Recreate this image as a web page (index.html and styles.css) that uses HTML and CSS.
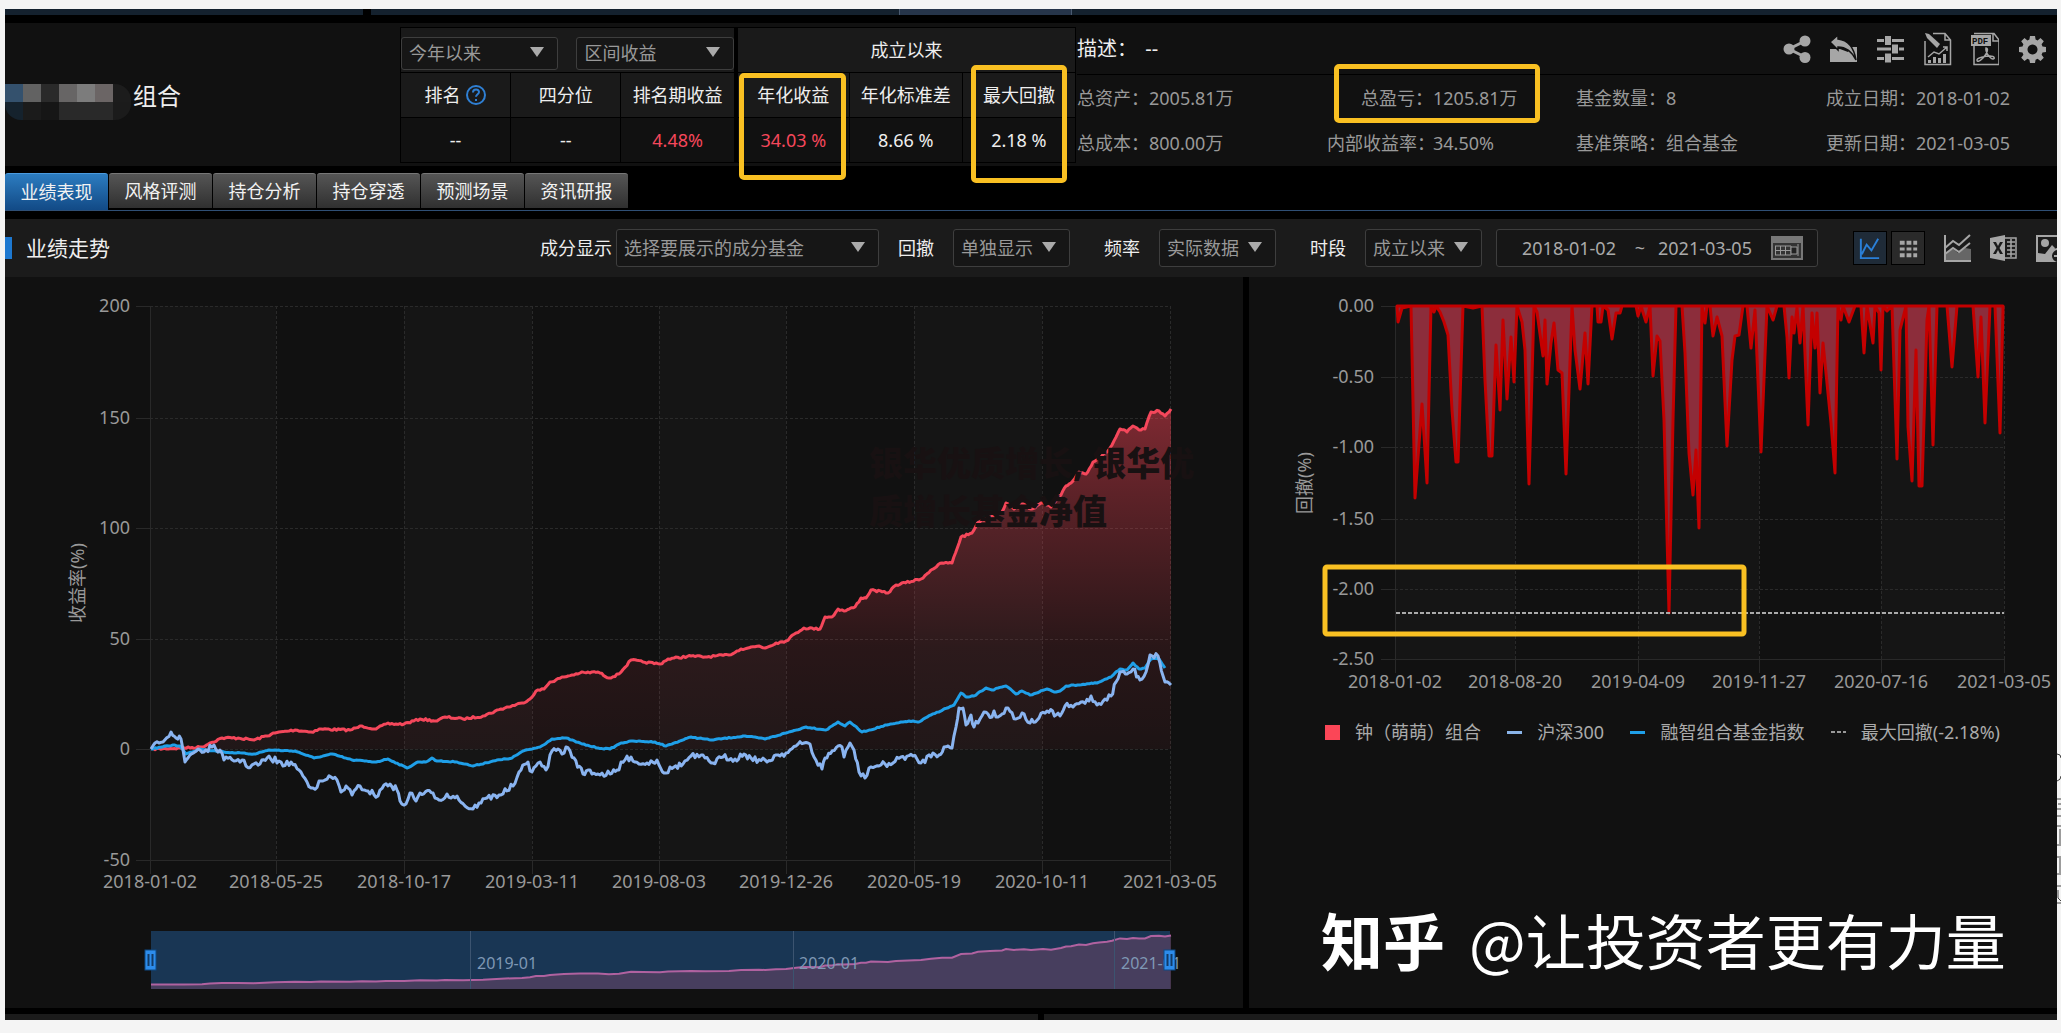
FILE: index.html
```html
<!DOCTYPE html>
<html lang="zh-CN">
<head>
<meta charset="utf-8">
<title>组合业绩表现</title>
<link rel="stylesheet" href="styles.css">
</head>
<body>
<div class="frame">
  <div class="app">
    <div class="top-strip"><i></i><i class="gap"></i><i></i><i class="current"></i><i></i></div>

    <header class="summary">
      <div class="portfolio">
        <div class="mosaic" aria-hidden="true">
          <i class="m1"></i><i class="m2"></i><i class="m3"></i><i class="m4"></i><i class="m5"></i><i class="m6"></i><i class="m7"></i>
          <i class="m8"></i><i class="m9"></i><i class="m10"></i><i class="m11"></i><i class="m11"></i><i class="m11"></i><i class="m9"></i>
        </div>
        <h1>组合</h1>
      </div>

      <div class="metrics-wrap">
        <table class="metrics">
          <colgroup><col class="c1"><col class="c1"><col class="c2"><col class="c3"><col class="c3"><col class="c3"></colgroup>
          <thead>
            <tr>
              <th colspan="3">
                <div class="pickers">
                  <span class="pick"><select aria-label="区间"><option>今年以来</option></select></span>
                  <span class="pick"><select aria-label="指标"><option>区间收益</option></select></span>
                </div>
              </th>
              <th colspan="3" class="sep">成立以来</th>
            </tr>
            <tr>
              <th><span class="rank">排名<svg class="help" viewBox="0 0 22 22"><circle cx="11" cy="11" r="9"/><path d="M8 8.600c0-4 6-4 6-.6 0 2.200-3 2.200-3 4.800M11 15v2"/></svg></span></th>
              <th>四分位</th><th>排名期收益</th><th class="sep">年化收益</th><th>年化标准差</th><th>最大回撤</th>
            </tr>
          </thead>
          <tbody>
            <tr><td>--</td><td>--</td><td class="up">4.48%</td><td class="up sep">34.03 %</td><td>8.66 %</td><td>2.18 %</td></tr>
          </tbody>
        </table>
        <div class="mark mark-return"></div>
        <div class="mark mark-drawdown"></div>
      </div>

      <div class="info">
        <div class="info-top">
          <p class="desc">描述： <span>--</span></p>
          <div class="actions">
            <button aria-label="分享"><svg viewBox="0 0 28 34"><path d="M22 9 6 17l16 8" fill="none" stroke="currentColor" stroke-width="3"/><circle cx="6" cy="17" r="5.500"/><circle cx="22" cy="9" r="5.500"/><circle cx="22" cy="25.500" r="5.500"/></svg></button>
            <button aria-label="导出"><svg viewBox="0 0 28 34"><path d="M0 17h10l8 3 4-5h5v15H0z"/><path d="M0 10 8 3v4c10 1 16 9 18 21-4-8-10-13-18-13v3z" stroke="#111" stroke-width="1.500"/></svg></button>
            <button aria-label="参数"><svg viewBox="0 0 28 34"><path d="M0 7h7v3H0zM15 7h12v3H15zM0 15.500h14v3H0zM22 15.500h5v3h-5zM0 25h7v3H0zM15 25h12v3H15zM8 4h6v9H8zM15 12.500h6v9h-6zM8 21.500h6v9H8z"/></svg></button>
            <button aria-label="报告"><svg viewBox="0 0 28 34"><path d="M1 9v23.500h25.500V8L21 1.500H9M21 1.500V8h5.500" fill="none" stroke="currentColor" stroke-width="1.500"/><path d="m1 1 4 1 11 10-3 4L3 6z"/><path d="m4 25 6-5 5 2 8-7M19 15h4v4" fill="none" stroke="currentColor" stroke-width="1.500"/><path d="M4 28h3v3H4zM9 25h3v6H9zM14 26h3v5h-3zM19 22h3v9h-3z"/></svg></button>
            <button aria-label="导出PDF"><svg viewBox="0 0 28 34"><path d="M3 14v18.500h25V8l-5-6.500H3M22 1.500V9h5.500" fill="none" stroke="currentColor" stroke-width="1.500"/><path d="M0 3h20v11H0z"/><text x="1" y="12" class="pdf">PDF</text><path d="M15 16c3 0 1 6-3 10s-6 4-6 2 8-4 13-4 5 3 3 3-8-6-7-11z" fill="none" stroke="currentColor" stroke-width="1.500"/></svg></button>
            <button aria-label="设置"><svg viewBox="0 0 28 34"><path fill-rule="evenodd" d="M12 4h5l.6 3.600 2 .9L22.500 6l3.300 3.300-2.200 3 .9 2.100 3.500.6v5l-3.500.6-.9 2.100 2.200 3-3.300 3.300-2.900-2.200-2 .9-.6 3.300h-5l-.6-3.300-2-.9-2.900 2.200-3.300-3.300 2.200-3-.9-2.100L1 20v-5l3.500-.6.9-2.100-2.200-3L6.500 6l2.900 2.500 2-.9zM14.500 12.500a5 5 0 1 0 .01 0z"/></svg></button>
          </div>
        </div>
        <dl class="facts">
          <div><dt>总资产：</dt><dd>2005.81万</dd></div>
          <div class="profit"><dt>总盈亏：</dt><dd>1205.81万</dd><i class="mark mark-profit"></i></div>
          <div><dt>基金数量：</dt><dd>8</dd></div>
          <div><dt>成立日期：</dt><dd>2018-01-02</dd></div>
          <div><dt>总成本：</dt><dd>800.00万</dd></div>
          <div class="profit"><dt>内部收益率：</dt><dd>34.50%</dd></div>
          <div><dt>基准策略：</dt><dd>组合基金</dd></div>
          <div><dt>更新日期：</dt><dd>2021-03-05</dd></div>
        </dl>
      </div>
    </header>

    <nav class="tabs">
      <button class="active">业绩表现</button><button>风格评测</button><button>持仓分析</button><button>持仓穿透</button><button>预测场景</button><button>资讯研报</button>
    </nav>

    <section class="toolbar">
      <h2>业绩走势</h2>
      <label class="field wide">成分显示<span class="pick"><select><option>选择要展示的成分基金</option></select></span></label>
      <label class="field">回撤<span class="pick"><select><option>单独显示</option></select></span></label>
      <label class="field far">频率<span class="pick"><select><option>实际数据</option></select></span></label>
      <label class="field far">时段<span class="pick"><select><option>成立以来</option></select></span></label>
      <div class="range">
        <input type="text" value="2018-01-02" aria-label="开始日期"><span>~</span><input type="text" value="2021-03-05" aria-label="结束日期">
        <svg viewBox="0 0 32 26"><path d="M0 1h32v24H0z" fill="#777"/><path d="M2 8h28v15H2z" fill="#333"/><path d="M4 11h16M4 15.500h16M4 20h16M4.500 11v9M9.500 11v9M14.500 11v9M20 11v9M27 9v12" stroke="#999" fill="none"/><path d="M20 12h6v7h-6z" fill="#222" stroke="#999"/></svg>
      </div>
      <div class="views">
        <button class="view on" aria-label="图表"><svg viewBox="0 0 27 28"><path d="M4 4v20h19M5 20l5-10 5 6 7-12" fill="none" stroke="#2a7fd8" stroke-width="2"/></svg></button>
        <button class="view" aria-label="表格"><svg viewBox="0 0 27 28"><path d="M5 6h5v4H5zM12 6h5v4h-5zM19 6h4v4h-4zM5 13h5v3H5zM12 13h5v3h-5zM19 13h4v3h-4zM5 19h5v4H5zM12 19h5v4h-5zM19 19h4v4h-4z"/></svg></button>
      </div>
      <div class="tools">
        <button aria-label="面积图"><svg viewBox="0 0 27 28"><path d="M1 20l8-5 5 4 7-5 6 1v12H1z" fill="#666"/><path d="M1 1v26h26M1 14l8-7 6 4L26 1M1 20l8-6 6 4 11-9" fill="none" stroke="currentColor" stroke-width="2"/></svg></button>
        <button aria-label="导出Excel"><svg viewBox="0 0 27 28"><path fill-rule="evenodd" d="M0 4 15 1v26L0 24zM3 8l3.500 6L3 20h3l2-4 2 4h3l-3.500-6L13 8h-3l-2 4-2-4z"/><path d="M15 4h11v20H15M17 8h8M17 12h8M17 16h8M17 20h8M21 5v18" fill="none" stroke="currentColor" stroke-width="1.500"/></svg></button>
        <button aria-label="导出图片"><svg viewBox="0 0 27 28"><path d="M1 2h26v25H1z" fill="none" stroke="currentColor" stroke-width="2"/><circle cx="9" cy="9" r="4"/><path d="m2 26 0-7 7 1 7-9 3 3-4 12z"/><circle cx="22" cy="22" r="7" fill="#1b1b1b" stroke="currentColor" stroke-width="2"/><path d="M18 22h8M22 18v8" stroke="currentColor" stroke-width="2"/></svg></button>
      </div>
    </section>

    <main class="panels">
      <section class="panel">
        <svg id="returns" class="chart" viewBox="5 277 1238 725"></svg>
      </section>
      <section class="panel">
        <svg id="drawdown" class="chart" viewBox="1249 277 808 430"></svg>
        <ul class="legend">
          <li><i class="key square"></i>钟（萌萌）组合</li>
          <li><i class="key light"></i>沪深300</li>
          <li><i class="key blue"></i>融智组合基金指数</li>
          <li><i class="key dashed"></i>最大回撤(-2.18%)</li>
        </ul>
        <p class="credit"><b>知乎</b><span>@让投资者更有力量</span></p>
      </section>
    </main>
    <div class="bottom-strip"><i></i><i></i></div>
  </div>
  <div class="gutter">
    <svg viewBox="0 0 4 160"><path d="M0 4q4 0 4 4M0 31q4-1 4-5M0 49h4M1 54h3M0 59h4M0 66h4M0 76h4M3 79v15M0 95h4M0 107h4M3 108v15M0 124h4M0 136h4M1 140v8l3 3M0 153h4" fill="none" stroke="#444"/></svg>
  </div>
</div>
<script src="charts.js"></script>
</body>
</html>
```
FILE: styles.css
```css
* { box-sizing: border-box; }

body {
  margin: 0;
  background: #f4f4f4;
  color: #eee;
  font: 18px/24px "Noto Sans", "Noto Sans CJK SC", sans-serif;
}

h1, h2, p, dl, dd, ul { margin: 0; padding: 0; font-weight: 400; }
i { font-style: normal; }
button { padding: 0; border: 0; background: none; color: #a6a6a6; font: inherit; }
button svg { display: block; width: 100%; fill: currentColor; }

.frame {
  display: grid;
  grid-template-columns: 5px minmax(0, 1fr) 4px;
  padding-top: 9px;
}
.app { grid-column: 2; overflow: hidden; background: #000; }
.gutter { padding-top: 741px; }
.gutter svg { display: block; width: 4px; height: 160px; }

.top-strip { display: grid; grid-template-columns: 358fr 8fr 528fr 173fr 985fr; height: 6px; margin-bottom: 8px; }
.top-strip i { background: #14212e; }
.top-strip .gap { background: #000; }
.top-strip .current { background: #26354a; border: solid #4a5a70; border-width: 0 1px; }

/* summary */
.summary { display: flex; height: 143px; background: #111; }
.portfolio { flex: 0 0 395px; display: flex; align-items: center; gap: 2px; }
.portfolio h1 { padding-top: 2px; font-size: 24px; line-height: 32px; }
.mosaic {
  display: grid;
  grid-template: repeat(2, 18px) / repeat(7, 18px);
  margin-top: 14px;
  border-radius: 0 16px 16px 16px;
  overflow: hidden;
}
.m1 { background: #34516d; } .m2 { background: #626262; } .m3 { background: #2a2a2a; }
.m4 { background: #676565; } .m5 { background: #7c7c7c; } .m6 { background: #6b6565; }
.m7 { background: #1c1c1c; } .m8 { background: #15222d; } .m9 { background: #1b1b1b; }
.m10 { background: #161616; } .m11 { background: #292929; }

.metrics-wrap { position: relative; flex: 0 0 676px; padding-top: 4px; }
.metrics { width: 100%; table-layout: fixed; border-collapse: collapse; }
.metrics .c1 { width: 110px; }
.metrics .c2 { width: 115px; }
.metrics .c3 { width: 113px; }
.metrics th, .metrics td { height: 45px; padding: 0; border: 1px solid #000; font-weight: 400; text-align: center; }
.metrics th { background: #1a1a1a; }
.metrics .sep { border-left-width: 4px; }
.metrics .up { color: #f5475b; }
.rank { display: inline-flex; align-items: center; gap: 4px; }
.help { width: 22px; height: 22px; fill: none; stroke: #2f7fd3; stroke-width: 2; }

.pickers { display: flex; gap: 18px; margin-top: 6px; }
.pickers .pick { width: 158px; height: 33px; }
.pick { position: relative; display: inline-block; }
.pick::after {
  content: "";
  position: absolute;
  top: 50%;
  right: 14px;
  margin-top: -6px;
  border: solid transparent;
  border-width: 10px 7px 0;
  border-top-color: #aaa;
}
.pick select {
  appearance: none;
  width: 100%;
  height: 100%;
  padding: 0 0 0 7px;
  border: 1px solid #3e3e3e;
  border-radius: 3px;
  background: #161616;
  color: #999;
  font: inherit;
}

.mark { position: absolute; z-index: 2; border: 5px solid #f9c022; border-radius: 5px; pointer-events: none; }
.mark-return { left: 339px; top: 50px; width: 107px; height: 107px; }
.mark-drawdown { left: 571px; top: 42px; width: 96px; height: 118px; }
.mark-profit { left: 7px; top: -11px; width: 206px; height: 59px; }

.info { flex: 1; min-width: 0; padding-left: 1px; }
.info-top { display: flex; justify-content: space-between; align-items: center; height: 52px; padding-right: 11px; border-bottom: 1px solid #000; }
.desc { font-size: 20px; }
.desc span { margin-left: 3px; }
.actions { display: flex; gap: 19px; }
.actions button { width: 28px; }
.pdf { fill: #111; font: bold 9px "Liberation Mono", monospace; }
.facts { display: grid; grid-template-columns: 250fr 249fr 250fr 231fr; color: #999; }
.facts div { position: relative; display: flex; height: 45px; align-items: center; }
.facts .profit dt { width: 106px; text-align: right; white-space: nowrap; }

/* tabs */
.tabs { display: flex; gap: 1px; margin: 7px 0 8px; border-bottom: 1px solid #2f4f75; }
.tabs button {
  width: 103px;
  height: 35px;
  margin-bottom: 2px;
  border-top: 1px solid #777;
  border-radius: 3px 3px 0 0;
  background: linear-gradient(#555, #303030);
  color: #f2f2f2;
}
.tabs .active { height: 37px; margin-bottom: 0; border-color: #4a9ade; background: linear-gradient(#2c7cc0, #124a86); }

/* toolbar */
.toolbar { display: flex; align-items: center; height: 58px; background: #1b1b1b; white-space: nowrap; }
.toolbar > * { flex-shrink: 0; }
.toolbar h2 { width: 535px; padding-left: 14px; border-left: 7px solid #1d78d0; font-size: 21px; line-height: 22px; }
.field { display: flex; align-items: center; gap: 19px; margin-right: 19px; }
.field .pick { width: 117px; height: 38px; }
.field.wide { gap: 4px; }
.field.wide .pick { width: 263px; }
.field + .field.far { margin-left: 15px; }
.range { display: flex; align-items: center; width: 322px; height: 38px; margin-left: -6px; padding: 0 14px 0 25px; border: 1px solid #3e3e3e; border-radius: 3px; background: #161616; color: #aaa; }
.field:has(+ .range) { margin-right: 20px; }
.range input { width: 100px; padding: 0; border: 0; background: none; color: inherit; font: inherit; }
.range span { width: 36px; text-align: center; }
.range svg { width: 32px; height: 26px; margin-left: auto; }
.views { display: flex; gap: 4px; margin: 0 19px 0 35px; }
.view { width: 34px; height: 34px; padding: 3px; border: 1px solid #000; background: #2a2a2a; }
.view.on { background: #1f2b38; }
.tools { display: flex; gap: 19px; }
.tools button { width: 27px; }

/* charts */
.panels { display: grid; grid-template-columns: 1238fr 808fr; gap: 6px; padding-bottom: 6px; }
.panel { min-width: 0; background: #111; }
.panel:first-child { padding-bottom: 6px; }
.chart { display: block; width: 100%; }
.chart text { fill: #999; font-size: 18px; }
.chart .end { text-anchor: end; }
.chart .mid { text-anchor: middle; }
.chart .brush-label { fill: #7f98b5; font-size: 16px; }
.chart .stamp { fill: #181112; font-size: 34px; font-weight: 900; }
.chart .pdf { fill: #111; }
.grid { fill: none; stroke: #2a2a2a; stroke-dasharray: 3 2; }
.axis { fill: none; stroke: #292929; }
.band { fill: #151515; }
.line { fill: none; stroke-width: 3; stroke-linejoin: round; }
.red { stroke: #f5475b; }
.blue { stroke: #1f9fe8; }
.light { stroke: #8ab4f0; }
.falls { fill: #8c2d3b; stroke: #c40000; stroke-width: 3; stroke-linejoin: round; }
.limit { fill: none; stroke: #aaa; stroke-width: 2; stroke-dasharray: 4 2; }
.frame-mark { fill: none; stroke: #f9c022; stroke-width: 5; }
.brush { fill: #193654; }
.brush-area { fill: #574161; fill-opacity: .75; }
.brush-line { fill: none; stroke: #b062a0; stroke-width: 2; }
.brush-tick { stroke: #3c5470; }
.handle { fill: #2d8ceb; stroke: #0e4a86; }

.legend { display: flex; justify-content: space-between; margin: 0 57px 0 76px; padding: 13px 0; color: #aaa; list-style: none; white-space: nowrap; }
.legend li { display: flex; align-items: center; gap: 15px; }
.key { width: 15px; }
.square { height: 15px; background: #fb4657; }
.key.light { height: 3px; background: #8ab4e8; }
.key.blue { height: 3px; background: #1f9fe8; }
.dashed { height: 2px; background: repeating-linear-gradient(90deg, #999 0 4px, transparent 4px 6px); }
.credit { display: flex; gap: 24px; margin: 138px 0 0 72px; color: #fff; font: 400 60px/88px "Noto Sans CJK SC", sans-serif; white-space: nowrap; }
.credit b { font-weight: 700; font-size: 62px; }

.bottom-strip { display: grid; grid-template-columns: 1033fr 1013fr; gap: 6px; height: 6px; }
.bottom-strip i { background: #1b1b1b; }
```
FILE: charts.js
```js
const red = [[151,749],[184,748],[202,747],[210,743],[222,738],[238,738],[254,740],[275,733],[295,730],[311,732],[321,729],[350,730],[362,726],[376,729],[386,724],[404,724],[420,719],[437,721],[445,717],[463,719],[483,716],[501,709],[522,703],[530,699],[536,691],[544,689],[550,682],[564,677],[580,673],[598,672],[609,678],[619,674],[631,660],[643,662],[660,664],[668,659],[691,656],[705,657],[729,655],[741,649],[759,646],[765,648],[776,643],[786,641],[796,633],[804,628],[820,629],[825,617],[832,617],[838,609],[844,611],[855,607],[861,598],[866,598],[871,590],[888,593],[896,585],[921,579],[931,570],[942,563],[952,563],[961,537],[972,533],[978,522],[990,517],[1002,512],[1006,503],[1014,509],[1024,504],[1031,509],[1043,503],[1051,507],[1061,495],[1066,486],[1071,483],[1079,472],[1086,474],[1093,462],[1099,458],[1107,452],[1112,445],[1120,429],[1127,432],[1133,426],[1139,430],[1145,429],[1151,412],[1159,411],[1165,416],[1171,409]];
const blue = [[151,749],[173,745],[180,746],[186,754],[200,749],[224,752],[254,754],[269,750],[295,751],[314,758],[332,754],[352,760],[376,762],[388,759],[407,768],[418,762],[426,762],[432,758],[437,761],[457,762],[473,766],[493,761],[512,758],[523,751],[540,747],[552,739],[566,738],[582,744],[598,748],[610,749],[621,743],[633,741],[655,742],[666,746],[691,737],[711,740],[745,736],[765,739],[786,733],[806,727],[826,730],[838,722],[845,726],[850,722],[862,732],[887,725],[909,721],[919,722],[931,715],[954,705],[961,693],[966,697],[974,696],[986,688],[992,690],[1006,686],[1016,694],[1022,691],[1030,695],[1047,689],[1054,692],[1060,691],[1066,686],[1097,683],[1111,677],[1120,669],[1127,670],[1133,663],[1139,669],[1145,668],[1151,659],[1159,659],[1165,668]];
const light = [[151,749],[159,743],[171,732],[176,738],[181,739],[185,762],[190,755],[198,749],[204,752],[212,747],[220,750],[224,760],[242,760],[246,766],[260,764],[267,758],[279,761],[283,766],[291,762],[299,770],[307,782],[313,788],[323,781],[331,777],[337,780],[341,792],[346,786],[352,795],[360,786],[368,791],[378,796],[384,785],[390,784],[397,790],[400,801],[406,804],[410,793],[416,801],[420,793],[433,793],[439,800],[447,794],[451,798],[457,796],[465,806],[473,809],[479,803],[487,798],[499,795],[513,786],[521,770],[528,762],[530,771],[538,763],[546,770],[552,751],[558,749],[562,754],[566,747],[574,758],[583,774],[588,770],[598,774],[610,774],[619,770],[621,762],[631,757],[639,764],[647,763],[657,760],[664,773],[674,767],[683,764],[691,756],[705,758],[713,763],[723,757],[735,759],[744,754],[751,758],[767,762],[776,755],[786,753],[796,746],[804,743],[810,744],[814,757],[822,769],[825,758],[838,746],[842,747],[844,757],[850,743],[854,750],[859,772],[865,778],[869,768],[881,765],[893,763],[901,757],[913,756],[921,763],[933,753],[939,755],[944,747],[952,748],[956,727],[959,708],[963,708],[966,725],[971,715],[974,727],[984,712],[992,717],[994,711],[998,717],[1008,708],[1016,719],[1022,713],[1030,723],[1039,718],[1047,711],[1060,716],[1065,706],[1073,707],[1081,702],[1089,701],[1091,696],[1097,705],[1105,699],[1111,696],[1116,682],[1120,672],[1127,674],[1133,669],[1140,680],[1146,672],[1150,655],[1158,656],[1165,682],[1171,685]];
const falls = [[1397,306],[1398,322],[1402,308],[1411,306],[1415,498],[1422,404],[1427,483],[1431,306],[1434,312],[1436,306],[1440,312],[1444,322],[1448,335],[1452,410],[1456,462],[1458,462],[1463,306],[1473,308],[1482,306],[1485,380],[1489,456],[1492,456],[1496,345],[1500,410],[1503,320],[1507,399],[1511,337],[1514,382],[1517,306],[1522,322],[1525,350],[1529,484],[1534,306],[1537,312],[1543,356],[1545,320],[1547,384],[1551,343],[1554,323],[1558,370],[1562,373],[1566,474],[1572,306],[1575,350],[1580,389],[1585,333],[1588,384],[1592,306],[1597,306],[1598,322],[1601,322],[1603,306],[1608,310],[1612,339],[1616,313],[1620,313],[1622,306],[1636,306],[1638,316],[1641,306],[1646,322],[1650,306],[1653,376],[1657,336],[1660,341],[1664,420],[1669,613],[1673,420],[1676,306],[1682,306],[1685,353],[1689,453],[1693,495],[1696,450],[1699,528],[1702,306],[1705,323],[1707,306],[1710,306],[1713,336],[1717,317],[1722,336],[1727,446],[1732,360],[1735,336],[1739,335],[1743,306],[1747,306],[1751,348],[1755,310],[1761,452],[1767,306],[1773,320],[1777,306],[1784,306],[1787,337],[1789,378],[1792,317],[1794,333],[1797,308],[1800,343],[1803,306],[1808,425],[1812,313],[1815,348],[1817,313],[1820,393],[1823,343],[1827,383],[1831,423],[1835,473],[1838,306],[1841,320],[1843,306],[1849,322],[1855,306],[1861,306],[1864,353],[1867,306],[1873,343],[1875,306],[1879,313],[1881,370],[1883,306],[1887,311],[1892,306],[1897,459],[1900,330],[1906,306],[1908,427],[1912,481],[1916,350],[1919,486],[1922,486],[1927,320],[1929,306],[1933,445],[1937,306],[1947,306],[1952,367],[1957,306],[1973,306],[1978,377],[1981,317],[1985,423],[1990,306],[1995,306],[2000,433],[2003,310]];

// Daily movement between the stored turning points.
let seed = 7;
function noise() {
  seed = (seed * 16807) % 2147483647;
  return seed / 2147483647 - 0.5;
}
function daily(points, amount) {
  const out = [points[0]];
  for (let i = 1; i < points.length; i++) {
    const [x0, y0] = points[i - 1], [x1, y1] = points[i];
    const steps = Math.max(1, Math.round((x1 - x0) / 2));
    for (let s = 1; s < steps; s++) {
      const t = s / steps;
      out.push([x0 + (x1 - x0) * t, y0 + (y1 - y0) * t + noise() * amount]);
    }
    out.push([x1, y1]);
  }
  return out;
}
const path = pts => 'M' + pts.map(p => p[0].toFixed(1) + ' ' + p[1].toFixed(1)).join('L');

function frame(xs, ys, dates, labels, labelX, dateY) {
  const left = xs[0], right = xs[xs.length - 1], top = ys[0], bottom = ys[ys.length - 1];
  let s = '';
  for (let i = 0; i < xs.length - 1; i += 2)
    s += `<rect class="band" x="${xs[i]}" y="${top}" width="${xs[i + 1] - xs[i]}" height="${bottom - top}"/>`;
  xs.forEach((x, i) => {
    s += `<path class="${i ? 'grid' : 'axis'}" d="M${x + .5} ${top}V${bottom}"/><path class="axis" d="M${x + .5} ${bottom}v14"/>`;
    s += `<text class="mid" x="${x}" y="${dateY}">${dates[i]}</text>`;
  });
  ys.forEach((y, i) => {
    s += `<path class="${i < ys.length - 1 ? 'grid' : 'axis'}" d="M${left} ${y + .5}H${right}"/><path class="axis" d="M${left - 14} ${y + .5}h14"/>`;
    s += `<text class="end" x="${labelX}" y="${y + 6}">${labels[i]}</text>`;
  });
  return s;
}

const redDaily = daily(red, 2);
const brush = red.map(([x, y]) => [x, 984.5 - (749 - y) * 0.144]);
const handle = x => `<rect class="handle" x="${x - 5}" y="950" width="11" height="20"/><path d="M${x - 1.5} 954v12M${x + 2.5} 954v12" stroke="#123a66" stroke-width="2"/>`;

document.getElementById('returns').innerHTML =
  '<defs><linearGradient id="fade" x1="0" y1="0" x2="0" y2="1"><stop offset="0" stop-color="#ff4658" stop-opacity=".46"/><stop offset=".25" stop-color="#ff4658" stop-opacity=".32"/><stop offset=".7" stop-color="#ff4658" stop-opacity=".1"/><stop offset="1" stop-color="#ff4658" stop-opacity=".05"/></linearGradient><clipPath id="plot"><path d="M151 306h1044v554H151z"/></clipPath></defs>' +
  frame([150, 276, 404, 532, 659, 786, 914, 1042, 1170], [306, 418, 528, 639, 749, 860],
    ['2018-01-02', '2018-05-25', '2018-10-17', '2019-03-11', '2019-08-03', '2019-12-26', '2020-05-19', '2020-10-11', '2021-03-05'],
    ['200', '150', '100', '50', '0', '-50'], 130, 888) +
  '<text class="mid" transform="translate(84 583) rotate(-90)">收益率(%)</text>' +
  `<path fill="url(#fade)" d="${path(redDaily)}V749H151Z"/>` +
  `<path class="line red" d="${path(redDaily)}"/>` +
  `<path class="line blue" d="${path(daily(blue, 1))}"/>` +
  `<path class="line light" d="${path(daily(light, 6))}"/>` +
  '<g clip-path="url(#plot)"><text class="stamp" x="869" y="476">银华优质增长, 银华优</text><text class="stamp" x="869" y="524">质增长基金净值</text></g>' +
  '<rect class="brush" x="151" y="931" width="1019" height="58"/>' +
  `<path class="brush-area" d="${path(brush)}V989H151Z"/><path class="brush-line" d="${path(brush)}"/>` +
  '<path class="brush-tick" d="M470.5 931v58M793.5 931v58M1114.5 931v58"/>' +
  '<text class="brush-label" x="477" y="969">2019-01</text><text class="brush-label" x="799" y="969">2020-01</text><text class="brush-label" x="1121" y="969">2021-01</text>' +
  handle(150) + handle(1169);

document.getElementById('drawdown').innerHTML =
  frame([1395, 1515, 1638, 1759, 1881, 2004], [306, 377, 447, 519, 589, 659],
    ['2018-01-02', '2018-08-20', '2019-04-09', '2019-11-27', '2020-07-16', '2021-03-05'],
    ['0.00', '-0.50', '-1.00', '-1.50', '-2.00', '-2.50'], 1374, 688) +
  '<text class="mid" transform="translate(1311 483) rotate(-90)">回撤(%)</text>' +
  `<path class="falls" d="${path(falls)}V306Z"/>` +
  '<path class="limit" d="M1396 613H2004"/>' +
  '<rect class="frame-mark" x="1325" y="567" width="419" height="67" rx="2"/>';
```
